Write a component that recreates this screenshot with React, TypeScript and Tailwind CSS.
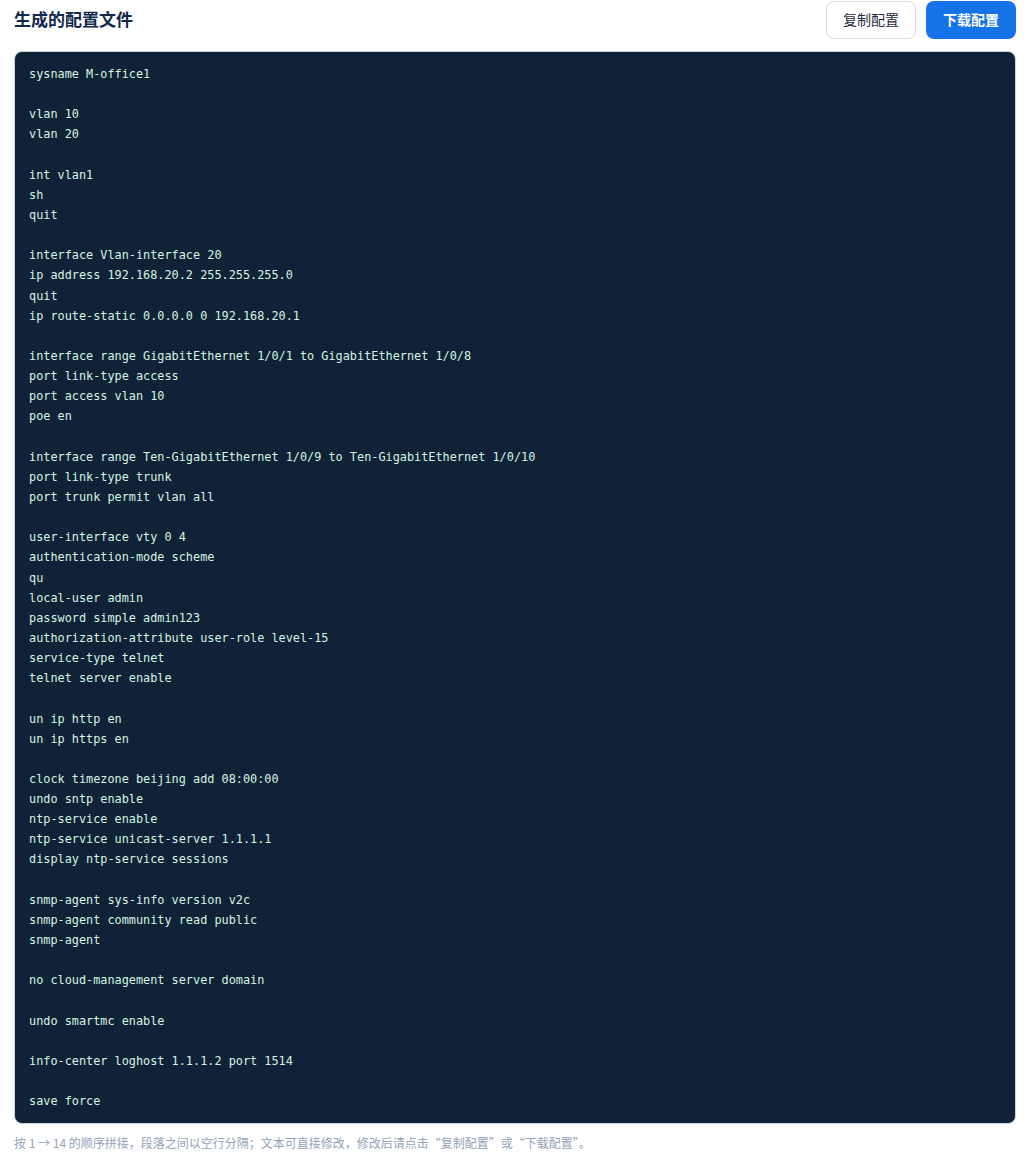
const config = `sysname M-office1

vlan 10
vlan 20

int vlan1
sh
quit

interface Vlan-interface 20
ip address 192.168.20.2 255.255.255.0
quit
ip route-static 0.0.0.0 0 192.168.20.1

interface range GigabitEthernet 1/0/1 to GigabitEthernet 1/0/8
port link-type access
port access vlan 10
poe en

interface range Ten-GigabitEthernet 1/0/9 to Ten-GigabitEthernet 1/0/10
port link-type trunk
port trunk permit vlan all

user-interface vty 0 4
authentication-mode scheme
qu
local-user admin
password simple admin123
authorization-attribute user-role level-15
service-type telnet
telnet server enable

un ip http en
un ip https en

clock timezone beijing add 08:00:00
undo sntp enable
ntp-service enable
ntp-service unicast-server 1.1.1.1
display ntp-service sessions

snmp-agent sys-info version v2c
snmp-agent community read public
snmp-agent

no cloud-management server domain

undo smartmc enable

info-center loghost 1.1.1.2 port 1514

save force`;

export default function App() {
  return (
    <div className="min-h-[1155px] bg-white pl-[14px] pr-[17px] font-['Liberation_Sans','Noto_Sans_CJK_SC',sans-serif]">
      {/* Header */}
      <div className="flex h-[51px] items-start justify-between">
        <h2 className="mt-[9px] text-[17px] font-bold leading-6 text-[#10294a]">
          生成的配置文件
        </h2>
        <div className="mt-px flex gap-[10px]">
          <button className="h-[38px] w-[90px] rounded-[8px] border border-[#d3dae4] bg-white text-[14px] text-[#1f2d3d]">
            复制配置
          </button>
          <button className="h-[38px] w-[90px] rounded-[8px] bg-[#1473e6] text-[14px] font-bold text-white">
            下载配置
          </button>
        </div>
      </div>

      {/* Config */}
      <pre className="h-[1073px] overflow-hidden rounded-[8px] border border-[#cbd5e1] bg-[#0f2237] px-[14px] pt-[12px] font-['DejaVu_Sans_Mono',monospace] text-[11.85px] leading-[20.14px] text-[#d4f5e2]">
        {config}
      </pre>

      {/* Footnote */}
      <p className="mt-[11px] font-['Noto_Sans_CJK_SC',sans-serif] text-[12px] leading-4 text-[#94a3b8]">
        按 1 → 14 的顺序拼接，段落之间以空行分隔；文本可直接修改，修改后请点击“复制配置”或“下载配置”。
      </p>
    </div>
  );
}
